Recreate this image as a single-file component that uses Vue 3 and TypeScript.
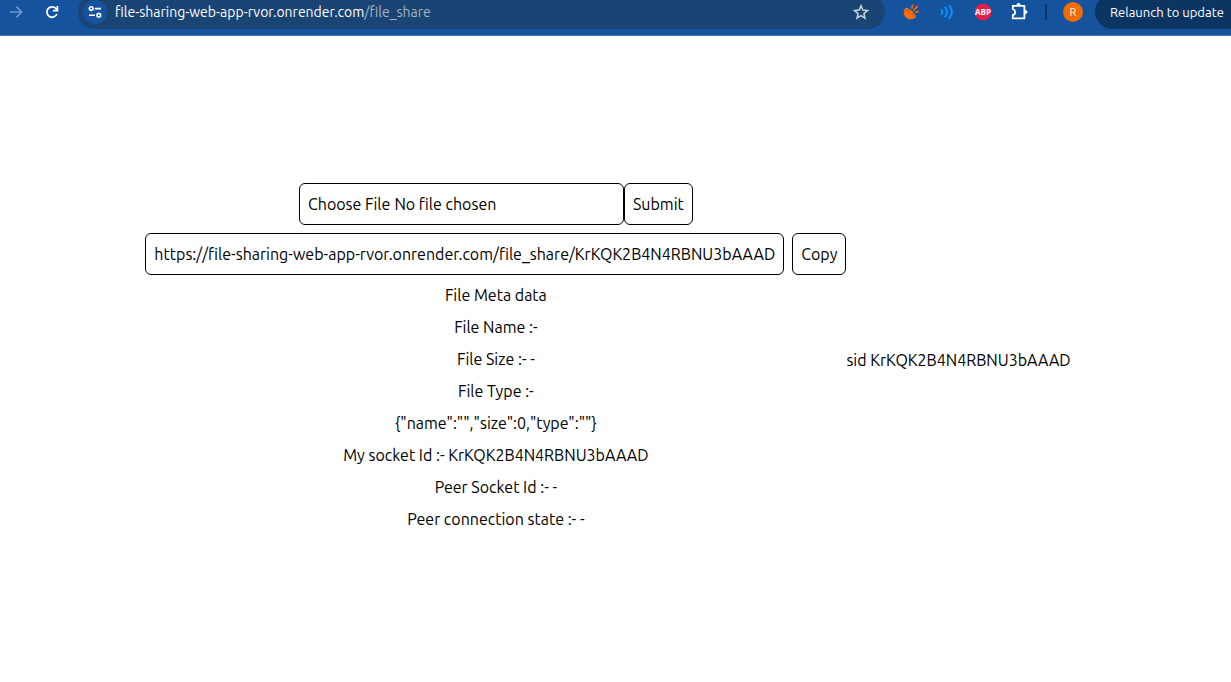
<script setup lang="ts">
import { computed, ref } from 'vue'

const host = 'file-sharing-web-app-rvor.onrender.com'
const path = '/file_share'
const socketId = ref('KrKQK2B4N4RBNU3bAAAD')
const peerId = ref('-')
const peerState = ref('-')
const meta = ref({ name: '', size: 0, type: '' })

const shareUrl = computed(() => `https://${host}${path}/${socketId.value}`)
const details = computed(() => [
  'File Meta data',
  `File Name :- ${meta.value.name}`,
  `File Size :- ${meta.value.size || '-'}`,
  `File Type :- ${meta.value.type}`,
  JSON.stringify(meta.value),
  `My socket Id :- ${socketId.value}`,
  `Peer Socket Id :- ${peerId.value}`,
  `Peer connection state :- ${peerState.value}`,
])

function pick(event: Event) {
  const file = (event.target as HTMLInputElement).files?.[0]
  meta.value = { name: file?.name ?? '', size: file?.size ?? 0, type: file?.type ?? '' }
}

function copy() {
  navigator.clipboard?.writeText(shareUrl.value)
}
</script>

<template>
  <div class="window">
    <header class="toolbar">
      <nav class="nav">
        <button class="tool forward" type="button" aria-label="Forward">
          <svg width="16" height="16" viewBox="0 0 16 16" fill="none" stroke="currentColor" stroke-width="1.6">
            <path d="M2 8h11.4M8.4 2.6 13.8 8l-5.4 5.4" />
          </svg>
        </button>
        <button class="tool" type="button" aria-label="Reload">
          <svg width="16" height="16" viewBox="0 0 16 16" fill="none" stroke="currentColor" stroke-width="1.8">
            <path d="M12.9 10A5.2 5.2 0 1 1 12 4.6l1.4 1.6" />
            <path d="M13.4 2v4.6H8.9" />
          </svg>
        </button>
      </nav>

      <div class="omnibox">
        <button class="site" type="button" aria-label="View site information">
          <svg width="16" height="16" viewBox="0 0 16 16" fill="none" stroke="currentColor" stroke-width="1.6">
            <circle cx="4.2" cy="4.6" r="1.8" />
            <path d="M7.8 4.6H14M2 11.2h6" />
            <circle cx="11.8" cy="11.2" r="1.8" />
          </svg>
        </button>
        <span class="address">{{ host }}<span class="path">{{ path }}</span></span>
        <button class="star" type="button" aria-label="Bookmark this tab">
          <svg width="18" height="18" viewBox="0 0 18 18" fill="none" stroke="currentColor" stroke-width="1.5">
            <path d="m9 2.8 1.8 4.3 4.7.4-3.6 3.1 1.1 4.6-4-2.5-4 2.5 1.1-4.6-3.6-3.1 4.7-.4z" />
          </svg>
        </button>
      </div>

      <div class="extensions">
        <button class="extension" type="button" aria-label="Satellite extension">
          <svg width="16" height="16" viewBox="0 0 16 16" fill="none" stroke="#ff6a00" stroke-linecap="round">
            <path d="M2.6 4.600C.4 7.600.800 11 3.200 13.200s6 2.400 8.400.400Z" fill="#ff6a00" stroke-width="1" />
            <path d="M3 4.600C5 4 12.800 11.600 12 13.400" stroke-width="1.500" />
            <circle cx="8.200" cy="8" r="1.200" fill="#ff6a00" />
            <path d="m9 4.200.400-2.800M11 6l3.200-3.600M12.400 8.200l2.800-.600" stroke-width="1.600" />
          </svg>
        </button>
        <button class="extension" type="button" aria-label="Sound extension">
          <svg width="16" height="16" viewBox="0 0 16 16" fill="none" stroke="#0a91ff" stroke-width="2" stroke-linecap="round">
            <path d="M2.600 6q1.600 2 0 4M6.200 3.600q3.600 4.400 0 8.800M10.400 2q5 6 0 12" />
          </svg>
        </button>
        <button class="extension" type="button" aria-label="Adblock Plus">
          <svg width="18" height="18" viewBox="0 0 18 18">
            <path d="M5.600 1h6.800L17 5.600v6.800L12.400 17H5.600L1 12.400V5.600Z" fill="#ed1e45" />
            <text class="abp" x="9" y="12" text-anchor="middle">ABP</text>
          </svg>
        </button>
        <button class="extension" type="button" aria-label="Extensions">
          <svg width="18" height="18" viewBox="0 0 18 18" fill="none" stroke="currentColor" stroke-width="1.800" stroke-linejoin="round">
            <path d="M2.800 2.800h11.600v12.600H2.800v-3.200q2.400-.800 2.400-3T2.800 6Z" />
            <path d="M7 2.600V2a1.600 1.600 0 0 1 3.200 0v.600ZM14.800 7.400h.600a1.600 1.600 0 0 1 0 3.200h-.600Z" fill="currentColor" stroke-width="1" />
          </svg>
        </button>
      </div>
      <span class="divider"></span>
      <button class="avatar" type="button" aria-label="Profile R">R</button>
      <button class="relaunch" type="button">Relaunch to update</button>
    </header>

    <main class="page">
      <section class="share">
        <form class="row" @submit.prevent>
          <input class="box file" type="file" aria-label="File to share" @change="pick" />
          <button class="box" type="submit">Submit</button>
        </form>
        <div class="row spaced">
          <div class="box link">{{ shareUrl }}</div>
          <button class="box" type="button" @click="copy">Copy</button>
        </div>
        <p v-for="line in details" :key="line" class="detail">{{ line }}</p>
      </section>
      <p class="sid">sid {{ socketId }}</p>
    </main>
  </div>
</template>

<style>
body {
  margin: 0;
  background: #fff;
}
</style>

<style scoped>
* {
  box-sizing: border-box;
}

.window {
  display: flex;
  flex-direction: column;
  min-height: 100vh;
  color: #000;
  font-family: Ubuntu, "Noto Sans", sans-serif;
  font-size: 16px;
  line-height: 24px;
}

button,
input {
  margin: 0;
  color: inherit;
  font: inherit;
}

button {
  padding: 0;
  border: 0;
  background: none;
}

svg {
  display: block;
}

.toolbar {
  display: flex;
  align-items: center;
  height: 36px;
  padding-bottom: 12px;
  overflow: hidden;
  border-bottom: 1px solid #4478b2;
  background: #15539e;
  color: #fff;
  font-size: 13px;
}

.nav {
  display: flex;
  gap: 4px;
  margin-right: 10px;
}

.tool,
.extension,
.site,
.star {
  display: flex;
  align-items: center;
  justify-content: center;
  height: 24px;
}

.tool {
  width: 32px;
}

.forward {
  color: #7399c6;
}

.omnibox {
  display: flex;
  flex: 1;
  align-items: center;
  min-width: 0;
  height: 34px;
  padding: 0 12px 0 5px;
  border-radius: 17px;
  background: #194473;
}

.site {
  flex: none;
  width: 24px;
  border-radius: 50%;
  background: #15539e;
}

.address {
  flex: 1;
  min-width: 0;
  margin-left: 8px;
  overflow: hidden;
  font-size: 14px;
  white-space: nowrap;
}

.path {
  color: #a3b4c8;
}

.star {
  width: 24px;
  color: #c9d1da;
}

.extensions {
  display: flex;
  margin-left: 8px;
}

.extension {
  width: 36px;
}

.abp {
  fill: #fff;
  font-family: "Open Sans", sans-serif;
  font-size: 8px;
  font-weight: 700;
}

.divider {
  width: 2px;
  height: 16px;
  margin: 0 16px 0 8px;
  background: #0d3563;
}

.avatar {
  width: 20px;
  height: 20px;
  border-radius: 50%;
  background: #ef6c00;
  font-size: 11px;
  line-height: 20px;
}

.relaunch {
  width: 136px;
  height: 34px;
  margin-left: 12px;
  padding-left: 15px;
  border-radius: 17px 0 0 17px;
  background: #0d3563;
  text-align: left;
  white-space: nowrap;
}

.page {
  display: flex;
  flex: 1;
  align-items: center;
  justify-content: center;
  padding: 2px 15px 0 0;
}

.share {
  display: flex;
  flex-direction: column;
  align-items: center;
  gap: 8px;
  padding-bottom: 7px;
}

.row {
  display: flex;
}

.spaced {
  gap: 8px;
}

.box {
  height: 42px;
  padding: 8px;
  border: 1px solid #000;
  border-radius: 6px;
  white-space: nowrap;
}

.file {
  width: 325px;
}

.file::file-selector-button {
  margin: 0 4px 0 0;
  padding: 0;
  border: 0;
  background: none;
  color: inherit;
  font: inherit;
}

.detail,
.sid {
  margin: 0;
}
</style>
